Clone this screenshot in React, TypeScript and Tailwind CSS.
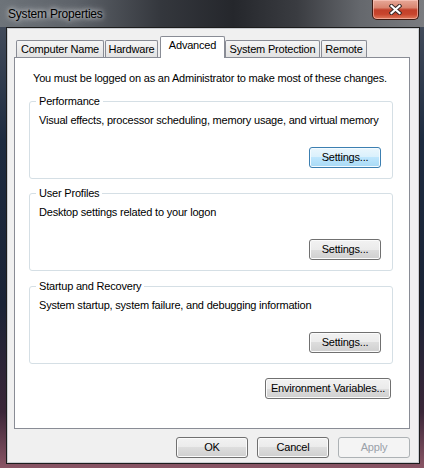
import React from "react";

const btn =
  "h-[21px] rounded-[3px] border border-[#707070] bg-[linear-gradient(180deg,#f2f2f2_0%,#ebebeb_50%,#dddddd_50%,#cfcfcf_100%)] shadow-[inset_0_0_0_1px_#fbfbfb] text-[11px] tracking-[-0.2px] text-black flex items-center justify-center";
const btnBlue =
  "h-[21px] rounded-[3px] border border-[#3c7fb1] bg-[linear-gradient(180deg,#eaf6fd_0%,#d9f0fc_50%,#bee6fd_50%,#a7d9f5_100%)] shadow-[inset_0_0_0_1px_#f4fbff] text-[11px] tracking-[-0.2px] text-black flex items-center justify-center";
const btnDisabled =
  "h-[21px] rounded-[3px] border border-[#adb2b5] bg-[#f4f4f4] text-[11px] tracking-[-0.2px] text-[#9aa1a9] flex items-center justify-center";

function Tab({ label, w, ml, selected }: { label: string; w: string; ml: string; selected?: boolean }) {
  if (selected) {
    return (
      <div
        className={`${w} ${ml} h-[22px] -mb-px bg-white border border-b-0 border-[#898c95] rounded-t-[2px] flex justify-center items-start pt-[1px] leading-[14px]`}
      >
        {label}
      </div>
    );
  }
  return (
    <div
      className={`${w} ${ml} h-[17px] border border-b-0 border-[#898c95] rounded-t-[2px] bg-[linear-gradient(180deg,#f5f5f5_0%,#ececec_50%,#e2e2e2_100%)] flex justify-center items-center leading-[14px]`}
    >
      {label}
    </div>
  );
}

function Group({ title, text, blue, mt }: { title: string; text: string; blue?: boolean; mt: string }) {
  return (
    <fieldset className={`${mt} ml-[14px] w-[364px] border border-[#d5dfe5] rounded-[3px] pl-[9px] pr-[11px] pt-[5px] pb-[10px]`}>
      <legend className="-ml-[3px] px-[3px] leading-[14px]">{title}</legend>
      <div className="leading-[14px]">{text}</div>
      <div className="flex justify-end mt-[20px]">
        <button className={`${blue ? btnBlue : btn} w-[72px]`}>Settings...</button>
      </div>
    </fieldset>
  );
}

export default function App() {
  return (
    <div className="w-[424px] h-[468px] flex flex-col overflow-hidden font-['Liberation_Sans',Arial,sans-serif] text-[11px] tracking-[-0.2px] text-black bg-[linear-gradient(180deg,#4a5260_0%,#1d2b40_30%,#1a2336_65%,#3a2638_88%,#8a5565_100%)]">
      {/* Title bar */}
      <div className="h-[27px] flex items-start bg-[linear-gradient(90deg,#6d7379_0%,#5d6269_18%,#34373d_38%,#25272c_55%,#3a3c41_70%,#65686d_85%,#7a7c80_100%)]">
        <div className="h-full flex items-center pl-[8px] text-[12px] tracking-[-0.2px] text-black [text-shadow:0_0_5px_rgba(255,255,255,0.9),0_0_10px_rgba(255,255,255,0.6)]">
          System Properties
        </div>
        <div className="ml-auto mr-[5px] w-[47px] h-[20px] rounded-b-[5px] border border-t-0 border-[#3e1a12] bg-[linear-gradient(180deg,#e7a898_0%,#d98570_40%,#c2402a_52%,#c8452d_75%,#e07a5c_100%)] shadow-[inset_0_0_0_1px_rgba(255,210,200,0.55)] flex items-center justify-center">
          <svg width="13" height="11" viewBox="0 0 13 11">
            <path d="M2.5 2 L10.5 9 M10.5 2 L2.5 9" stroke="#3a2a28" strokeWidth="4.2" strokeLinecap="square" />
            <path d="M2.5 2 L10.5 9 M10.5 2 L2.5 9" stroke="#ffffff" strokeWidth="2.2" strokeLinecap="square" />
          </svg>
        </div>
      </div>

      {/* Client area */}
      <div className="flex-1 ml-[6px] mr-[4px] mb-[4px] border border-[#1c1c1c] flex">
        <div className="flex-1 border border-[#c9ccd1] bg-[#f0f0f0] flex flex-col pt-[7px] pl-[6px] pr-[8px] pb-[4px]">
          {/* Tabs */}
          <div className="relative z-10 h-[21px] flex items-end pl-[2px]">
            <Tab label="Computer Name" w="w-[88px]" ml="ml-0" />
            <Tab label="Hardware" w="w-[53px]" ml="ml-[1px]" />
            <Tab label="Advanced" w="w-[65px]" ml="ml-[2px]" selected />
            <Tab label="System Protection" w="w-[95px]" ml="ml-0" />
            <Tab label="Remote" w="w-[46px]" ml="ml-[1px]" />
          </div>

          {/* Panel */}
          <div className="flex-1 border border-[#898c95] bg-white flex flex-col">
            <div className="mt-[13px] ml-[18px] leading-[14px]">
              You must be logged on as an Administrator to make most of these changes.
            </div>
            <Group
              mt="mt-[9px]"
              title="Performance"
              text="Visual effects, processor scheduling, memory usage, and virtual memory"
              blue
            />
            <Group mt="mt-[7px]" title="User Profiles" text="Desktop settings related to your logon" />
            <Group
              mt="mt-[8px]"
              title="Startup and Recovery"
              text="System startup, system failure, and debugging information"
            />
            <div className="flex justify-end mt-[14px] mr-[18px]">
              <button className={`${btn} w-[126px]`}>Environment Variables...</button>
            </div>
          </div>

          {/* Bottom buttons */}
          <div className="mt-[8px] flex justify-end gap-[9px]">
            <button className={`${btn} w-[72px]`}>OK</button>
            <button className={`${btn} w-[72px]`}>Cancel</button>
            <button className={`${btnDisabled} w-[72px]`}>Apply</button>
          </div>
        </div>
      </div>
    </div>
  );
}
